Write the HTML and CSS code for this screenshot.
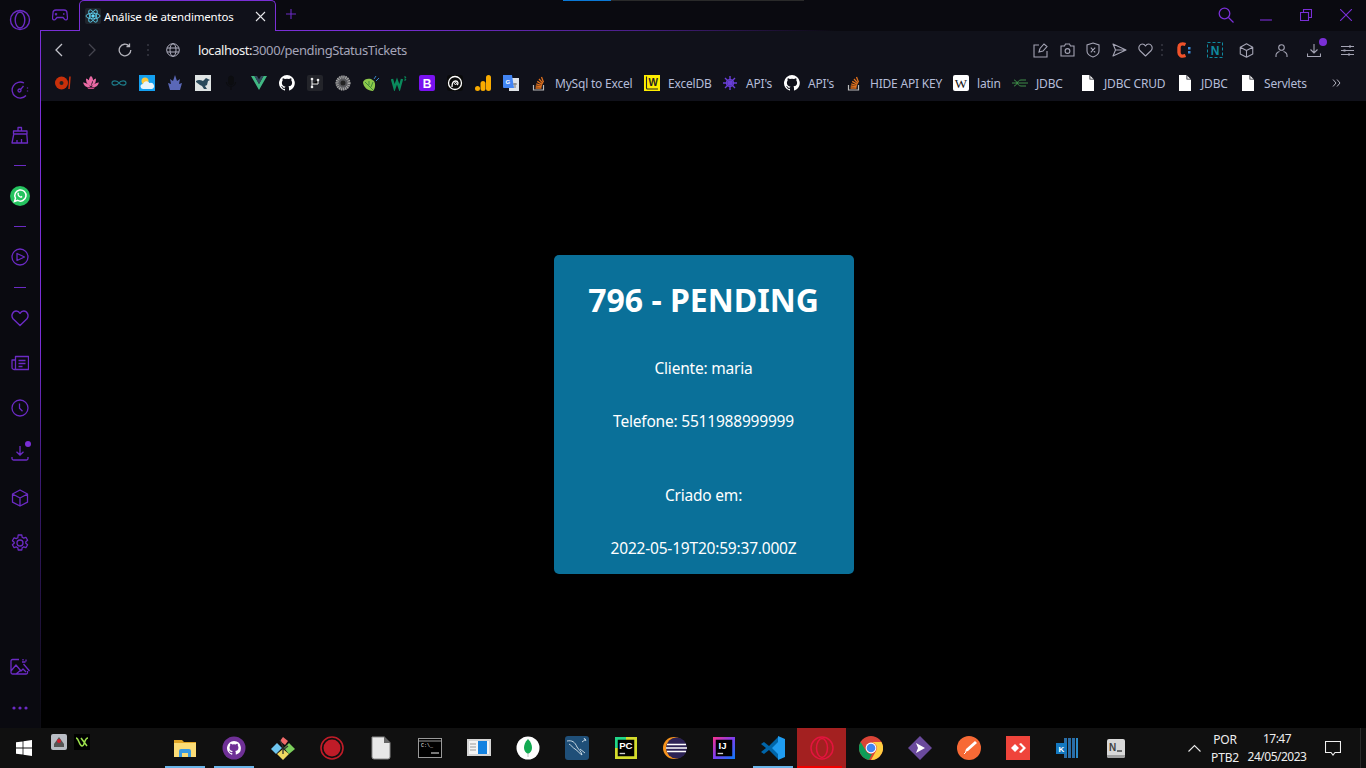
FILE: index.html
```html
<!DOCTYPE html>
<html>
    <head>
        <meta charset="utf-8" />
        <title>Análise de atendimentos</title>
        <link rel="stylesheet" href="styles.css">
    </head>
    <body>
        <svg class="defs" width="0" height="0">
            <symbol id="i-github" viewBox="0 0 16 16">
                <path fill="#fff" d="M8 0a8 8 0 0 0-2.5 15.6c.4.1.5-.2.5-.4v-1.4c-2.2.5-2.7-1-2.7-1-.4-.9-.9-1.200-.9-1.200-.7-.5.1-.5.1-.5.8.1 1.200.8 1.200.8.7 1.200 1.900.9 2.300.7.1-.5.3-.9.5-1.100-1.800-.2-3.600-.9-3.600-4 0-.9.3-1.600.8-2.100-.1-.2-.4-1 .1-2.100 0 0 .7-.2 2.200.8a7.600 7.600 0 0 1 4 0c1.500-1 2.200-.8 2.200-.8.4 1.100.2 1.900.1 2.100.5.6.8 1.300.8 2.100 0 3.100-1.900 3.700-3.700 3.900.3.3.6.7.6 1.500v2.200c0 .2.100.5.6.4A8 8 0 0 0 8 0z"/>
            </symbol>
            <symbol id="i-stack" viewBox="0 0 16 16">
                <path fill="none" stroke="#bbb" stroke-width="1.200" d="M2.500 10v5h10v-5"/>
                <path fill="none" stroke="#e0701c" stroke-width="1.300" d="M4.500 13h6M4.700 11l6 .6M5.200 8.800l5.800 1.700M6.200 6.400l5.200 3M8 4l4 4.400M10.500 2l2 5.300"/>
            </symbol>
            <symbol id="i-file" viewBox="0 0 16 16">
                <path fill="#fff" d="M2 0h7.500L14 4.500V16H2z"/>
                <path fill="#12131c" d="M9.500 0v4.500H14v-.8h-3.700V0z"/>
            </symbol>
            <symbol id="i-box" viewBox="0 0 18 18">
                <path fill="none" stroke="currentColor" stroke-width="1.300" stroke-linejoin="round" d="M9 1l7.500 4v8.200L9 17l-7.500-3.800V5zM1.500 5L9 9l7.500-4M9 9v8"/>
            </symbol>
        </svg>

        <div class="app">
            <aside class="sidebar">
                <div class="side-logo">
                    <svg width="22" height="22" viewBox="0 0 22 22" fill="none" stroke="#6b2bc4" stroke-width="1.400"><circle cx="11" cy="11" r="9.500"/><ellipse cx="11" cy="11" rx="4.800" ry="8"/></svg>
                </div>
                <div class="side-top">
                    <div class="side-btn"><svg width="18" height="18" viewBox="0 0 18 18" fill="none" stroke="#6b2bc4" stroke-width="1.300"><path d="M15 14.500A8 8 0 1 1 13 2"/><circle cx="8.500" cy="9.500" r="1.500"/><path d="M9.700 8.300l2.800-3.300"/><path stroke-dasharray="1 2" d="M16.500 6.500v5"/></svg></div>
                    <div class="side-btn"><svg width="18" height="18" viewBox="0 0 18 18" fill="none" stroke="#6b2bc4" stroke-width="1.300" stroke-linejoin="round"><path d="M7 5V1.500h3.500V5M2.500 5H16v3H2.500zM2.800 8L1 17h15.500l-.7-9M6 17v-3M10.500 17v-4"/></svg></div>
                    <div class="side-sep"></div>
                    <div class="side-btn"><svg width="20" height="20" viewBox="0 0 20 20"><circle cx="10" cy="10" r="10" fill="#25c35f"/><path fill="none" stroke="#fff" stroke-width="1.500" d="M4.500 15.500l1-3.300a5.600 5.600 0 1 1 2.200 2.200z"/><path fill="#fff" d="M7.600 6.800c.5-.5.900-.3 1.100.2l.4.900-.5.700c.4.800 1 1.400 1.900 1.800l.7-.6 1.100.6c.2.600-.1 1.200-.9 1.400-2.200.2-4.700-2.500-3.800-5z"/></svg></div>
                    <div class="side-sep"></div>
                    <div class="side-btn"><svg width="18" height="18" viewBox="0 0 18 18" fill="none" stroke="#6b2bc4" stroke-width="1.300" stroke-linejoin="round"><circle cx="9" cy="9" r="8"/><path d="M6 5.500L13.500 9 6 12.500z"/></svg></div>
                    <div class="side-sep"></div>
                    <div class="side-btn"><svg width="18" height="18" viewBox="0 0 18 18" fill="none" stroke="#6b2bc4" stroke-width="1.400" stroke-linejoin="round"><path d="M9 16.500L2 9.700C-.5 6.500 2 2 5.200 2 7 2 8.300 3 9 4.300 9.700 3 11 2 12.800 2 16 2 18.500 6.500 16 9.700z"/></svg></div>
                    <div class="side-btn"><svg width="18" height="18" viewBox="0 0 18 18" fill="none" stroke="#6b2bc4" stroke-width="1.300" stroke-linejoin="round"><path d="M4.500 2.500h13v13H3A2 2 0 0 1 1 13.500V6h3.500zM4.500 6v9M7.500 6.500h7M7.500 9.500h7M7.500 12.500h4"/></svg></div>
                    <div class="side-btn"><svg width="18" height="18" viewBox="0 0 18 18" fill="none" stroke="#6b2bc4" stroke-width="1.300"><circle cx="9" cy="9" r="8"/><path d="M8.500 4.500v4.700l3 3"/></svg></div>
                    <div class="side-btn has-dot"><svg width="18" height="18" viewBox="0 0 18 18" fill="none" stroke="#6b2bc4" stroke-width="1.300"><path d="M9 2v9M5.500 7.800L9 11l3.500-3.200M1 13v1.500A1.500 1.500 0 0 0 2.500 16h13a1.500 1.500 0 0 0 1.500-1.500V13"/></svg><span class="badge"></span></div>
                    <div class="side-btn"><svg width="18" height="18" class="purple"><use href="#i-box"/></svg></div>
                    <div class="side-btn"><svg width="18" height="18" viewBox="0 0 18 18" fill="none" stroke="#6b2bc4" stroke-width="1.300" stroke-linejoin="round"><circle cx="9" cy="9" r="3"/><path d="M7.200 1h3.600l.4 2.300 1.500.8 2.200-.8 1.700 3-1.800 1.500v1.400l1.800 1.500-1.700 3-2.200-.8-1.500.8-.4 2.300H7.200l-.4-2.300-1.500-.8-2.200.8-1.700-3 1.800-1.500V8.300L1.400 6.800l1.700-3 2.200.8 1.500-.8z"/></svg></div>
                </div>
                <div class="side-bottom">
                    <div class="side-low"><svg width="20" height="18" viewBox="0 0 20 18" fill="none" stroke="#6b2bc4" stroke-width="1.300" stroke-linejoin="round"><path d="M9 1.500H2.500A1.500 1.500 0 0 0 1 3v11.500A1.500 1.500 0 0 0 2.500 16H16a1.500 1.500 0 0 0 1.500-1V13M1 13l5-6 5 6 2-2 3 3M6 16l5-4M13 1v1.500M12 4h3.500M13.500 6l6 7M16 1.500v2"/></svg></div>
                    <div class="side-low"><svg width="16" height="4" viewBox="0 0 16 4" fill="#6b2bc4"><circle cx="2" cy="2" r="1.600"/><circle cx="8" cy="2" r="1.600"/><circle cx="14" cy="2" r="1.600"/></svg></div>
                </div>
            </aside>

            <div class="browser">
                <header class="tabstrip">
                    <span class="progress"></span>
                    <div class="tab-game"><svg width="16" height="12" viewBox="0 0 16 12" fill="none" stroke="#6b2bc4" stroke-width="1.300"><path d="M4 1h8a3 3 0 0 1 3 3l.5 5c0 2-2.200 2.500-3.200 1L11 8.500H5L3.700 10C2.700 11.500.5 11 .5 9L1 4a3 3 0 0 1 3-3zM4 4v2.500M2.800 5.200h2.400M11 5h1.500"/></svg></div>
                    <div class="tab">
                        <span class="tab-favicon"><svg width="16" height="16" viewBox="0 0 16 16" fill="none" stroke="#61dafb" stroke-width=".8"><circle cx="8" cy="8" r="1.300" fill="#61dafb"/><ellipse cx="8" cy="8" rx="7" ry="2.800"/><ellipse cx="8" cy="8" rx="7" ry="2.800" transform="rotate(60 8 8)"/><ellipse cx="8" cy="8" rx="7" ry="2.800" transform="rotate(120 8 8)"/></svg></span>
                        <span class="tab-title">Análise de atendimentos</span>
                        <svg class="tab-close" width="11" height="11" viewBox="0 0 11 11" stroke="#e6e6ea" stroke-width="1.100"><path d="M1 1l9 9M10 1l-9 9"/></svg>
                    </div>
                    <div class="tab-new"><svg width="12" height="12" viewBox="0 0 12 12" stroke="#6b2bc4" stroke-width="1.100"><path d="M6 1v10M1 6h10"/></svg></div>
                    <div class="win-buttons">
                        <span><svg width="16" height="16" viewBox="0 0 16 16" fill="none" stroke="#7a2fd6" stroke-width="1.300"><circle cx="6.500" cy="6.500" r="5.300"/><path d="M10.500 10.500l5 5"/></svg></span>
                        <span><svg width="12" height="12" viewBox="0 0 12 12" stroke="#7a2fd6" stroke-width="1.100"><path d="M0 11h12"/></svg></span>
                        <span><svg width="12" height="12" viewBox="0 0 12 12" fill="none" stroke="#7a2fd6" stroke-width="1.100"><path d="M.5 3.500h8v8h-8zM3.500 3.500v-3h8v8h-3"/></svg></span>
                        <span><svg width="12" height="12" viewBox="0 0 12 12" stroke="#7a2fd6" stroke-width="1.100"><path d="M0 0l12 12M12 0L0 12"/></svg></span>
                    </div>
                </header>

                <div class="panel">
                    <div class="toolbar">
                        <div class="nav-left">
                            <span><svg width="10" height="14" viewBox="0 0 10 14" fill="none" stroke="#c4c4cc" stroke-width="1.300"><path d="M8 1L2 7l6 6"/></svg></span>
                            <span><svg width="10" height="14" viewBox="0 0 10 14" fill="none" stroke="#45454f" stroke-width="1.300"><path d="M2 1l6 6-6 6"/></svg></span>
                            <span><svg width="14" height="14" viewBox="0 0 14 14" fill="none" stroke="#b4b4bc" stroke-width="1.300"><path d="M12.800 7a5.800 5.800 0 1 1-1.700-4.100M11.500.5v3h-3"/></svg></span>
                            <span class="dots"></span>
                            <span><svg width="14" height="14" viewBox="0 0 14 14" fill="none" stroke="#b0b0c0" stroke-width="1"><circle cx="7" cy="7" r="6.300"/><ellipse cx="7" cy="7" rx="3" ry="6.300"/><path d="M1 5h12M1 9h12"/></svg></span>
                        </div>
                        <div class="url"><b>localhost:</b>3000/pendingStatusTickets</div>
                        <div class="nav-right">
                            <span><svg width="16" height="16" viewBox="0 0 16 16" fill="none" stroke="#a4a4b4" stroke-width="1.100"><path d="M6 3H1v12h13V9M6 10l1-3.500L11 2l3 2.500-4 4.500z"/></svg></span>
                            <span><svg width="15" height="14" viewBox="0 0 15 14" fill="none" stroke="#a4a4b4" stroke-width="1.100"><path d="M1 3h3.500L5.500 1h4l1 2H14v10H1z"/><circle cx="7.500" cy="8" r="2.400"/></svg></span>
                            <span><svg width="14" height="16" viewBox="0 0 14 16" fill="none" stroke="#a4a4b4" stroke-width="1.100"><path d="M7 1l6 2v6c0 3-3 5-6 6-3-1-6-3-6-6V3zM4.800 5.700l4.400 4.600M9.200 5.700l-4.400 4.600"/></svg></span>
                            <span><svg width="15" height="14" viewBox="0 0 15 14" fill="none" stroke="#a4a4b4" stroke-width="1.100" stroke-linejoin="round"><path d="M1 1l13 6-13 6 2.500-6zM3.500 7H14"/></svg></span>
                            <span><svg width="15" height="14" viewBox="0 0 15 14" fill="none" stroke="#a4a4b4" stroke-width="1.100" stroke-linejoin="round"><path d="M7.500 13L1.800 7.500C-.3 5 1.500 1 4.200 1c1.500 0 2.700.8 3.300 2 .6-1.200 1.800-2 3.300-2 2.700 0 4.500 4 2.400 6.500z"/></svg></span>
                            <span class="dots"></span>
                            <span><svg width="14" height="16" viewBox="0 0 14 16"><path fill="none" stroke="#f0522a" stroke-width="3.400" d="M8.500 2.500C4.500 1 2 2.500 2 5.500v5c0 3 2.500 4.500 6.500 3"/><rect x="11" y="5" width="2.500" height="2.500" fill="#3a8ad8"/><rect x="11" y="9" width="2.500" height="2.500" fill="#3a8ad8"/></svg></span>
                            <span><svg width="16" height="16" viewBox="0 0 16 16"><rect x=".5" y=".5" width="15" height="15" fill="none" stroke="#0f8aa0" stroke-dasharray="3 2"/><text x="8" y="12.500" class="ext-n">N</text></svg></span>
                            <span class="grey"><svg width="15" height="15"><use href="#i-box"/></svg></span>
                            <span><svg width="13" height="13" viewBox="0 0 13 13" fill="none" stroke="#a4a4b4" stroke-width="1.100"><circle cx="6.500" cy="3.500" r="2.800"/><path d="M1 13v-1.500C1 9 3 8 4.500 7.500M12 13v-1.500C12 9 10 8 8.500 7.500"/></svg></span>
                            <span class="has-dot"><svg width="14" height="14" viewBox="0 0 14 14" fill="none" stroke="#a4a4b4" stroke-width="1.100"><path d="M7 1v9M3.500 6.500L7 10l3.500-3.500M.5 10.500v3h13v-3"/></svg><span class="badge badge-top"></span></span>
                            <span><svg width="13" height="11" viewBox="0 0 13 11" stroke="#a4a4b4" stroke-width="1"><path d="M0 1.500h13M0 5.500h13M0 9.500h13"/><path stroke-width="2" d="M9 .5v2M3.500 4.500v2M8 8.500v2"/></svg></span>
                        </div>
                    </div>

                    <nav class="bookmarks">
                        <span class="bm"><svg width="16" height="16" viewBox="0 0 16 16"><circle cx="6.500" cy="8" r="6.500" fill="#c8300a"/><circle cx="6.500" cy="8" r="2" fill="#222"/><path stroke="#c8300a" stroke-width="1.500" d="M15 1.500L14 14"/></svg></span>
                        <span class="bm"><svg width="16" height="16" viewBox="0 0 16 16" fill="#ea6aa4"><path d="M8 1c2.500 2 3 6 0 10-3-4-2.500-8 0-10zM3 3.500c2.500.5 4.500 3 5 7.500-4-1-5-4-5-7.500zM13 3.500c-2.500.5-4.500 3-5 7.500 4-1 5-4 5-7.500z"/><path d="M0 7.500c2 0 5 1 7.500 4-3.500 1.500-6 .5-7.500-4zM16 7.500c-2 0-5 1-7.500 4 3.500 1.500 6 .5 7.500-4z"/><path fill="#c84a85" d="M4 12.500h8L10.500 14h-5z"/></svg></span>
                        <span class="bm"><svg width="16" height="16" viewBox="0 0 16 16" fill="none" stroke="#1d7a88" stroke-width="1.200"><path d="M8 8C6.500 5.500 1 5 1 8s5.500 2.500 7 0c1.500-2.500 7-3 7 0s-5.500 2.500-7 0z"/></svg></span>
                        <span class="bm"><svg width="16" height="16" viewBox="0 0 16 16"><rect width="16" height="16" fill="#14a0f0"/><circle cx="6" cy="6" r="3.500" fill="#ffc83a"/><path fill="#e8f4fc" d="M4 14a2.500 2.500 0 0 1 0-5 3.500 3.500 0 0 1 6.500-1A3 3 0 0 1 13 14z"/></svg></span>
                        <span class="bm"><svg width="16" height="16" viewBox="0 0 16 16" fill="#5a68b8"><path d="M8 0l2 6 3-2-1 5 3-1-2 7H3L1 8l3 1-1-5 3 2z"/></svg></span>
                        <span class="bm"><svg width="16" height="16" viewBox="0 0 16 16"><rect width="16" height="16" fill="#dfe4e4"/><path fill="#2a4a5c" d="M1 6c2-1.500 5-1 7 0l3-3 2 1 2 1-2 1-1 4-2 1 2 3H9l-2-3-2-1-4-3z"/></svg></span>
                        <span class="bm"><svg width="16" height="16" viewBox="0 0 16 16" fill="#0c0d10" stroke="#0c0d10"><rect x="5.500" y="1" width="5" height="9" rx="2.500"/><path fill="none" stroke-width="1.200" d="M3.500 7a4.500 4.500 0 0 0 9 0M8 11.500V15"/></svg></span>
                        <span class="bm"><svg width="16" height="16" viewBox="0 0 16 16"><path fill="#41b883" d="M0 1h3.500L8 9l4.500-8H16L8 15z"/><path fill="#34495e" d="M3.500 1h2.500L8 4.500 10 1h2.500L8 9z"/></svg></span>
                        <span class="bm"><svg width="16" height="16"><use href="#i-github"/></svg></span>
                        <span class="bm"><svg width="16" height="16" viewBox="0 0 16 16"><rect width="16" height="16" rx="2" fill="#23242a"/><path stroke="#eee" d="M5 4v8M5 9h6V5"/><circle cx="5" cy="4" r="1.300" fill="#eee"/><circle cx="5" cy="12" r="1.300" fill="#eee"/><circle cx="11" cy="5" r="1.300" fill="#eee"/></svg></span>
                        <span class="bm"><svg width="16" height="16" viewBox="0 0 16 16" fill="none"><circle cx="8" cy="8" r="7.500" fill="#55565a"/><circle cx="8" cy="8" r="6" stroke="#a8a8a8" stroke-width="3" stroke-dasharray="1 1"/><circle cx="8" cy="8" r="2.500" fill="#222"/></svg></span>
                        <span class="bm"><svg width="16" height="16" viewBox="0 0 16 16"><path fill="#8cc84b" d="M0 7c1-3 5-4 8-3l3 2c2 3 1 8-1 10-5 0-10-4-10-9z"/><path stroke="#3e8a3a" fill="none" d="M2 7l8 8M6 10V6M8 12l2-5"/><path stroke="#3a86c8" d="M11 4l2-3M13 6l3-3"/></svg></span>
                        <span class="bm"><svg width="16" height="16" viewBox="0 0 16 16"><path fill="none" stroke="#0a8a5c" stroke-width="2.400" d="M1 4l2.500 9L6 6l2.500 7L11 4"/><path stroke="#0a8a5c" d="M13 2h2l-1 1.500 1 1.500h-2"/></svg></span>
                        <span class="bm"><svg width="16" height="16" viewBox="0 0 16 16"><rect width="16" height="16" rx="2" fill="#7a12f0"/><text x="8" y="12.500" class="bm-b">B</text></svg></span>
                        <span class="bm"><svg width="16" height="16" viewBox="0 0 16 16" fill="none" stroke="#fff"><rect width="16" height="16" rx="3" fill="#0a0a0a" stroke="none"/><circle cx="8" cy="8" r="6.500" stroke-width="1.300"/><path stroke-width="1.300" d="M5 12c0-3 .5-6 3.500-6s3 3 1.500 4"/><circle cx="8.500" cy="8.500" r="1"/></svg></span>
                        <span class="bm"><svg width="16" height="16" viewBox="0 0 16 16" fill="#f9ab00"><rect x="11" y="0" width="5" height="16" rx="2.500"/><rect x="5.500" y="6" width="5" height="10" rx="2.500"/><circle cx="2.500" cy="13.500" r="2.500"/></svg></span>
                        <span class="bm"><svg width="16" height="16" viewBox="0 0 16 16"><rect x="6" y="3" width="10" height="13" fill="#dfe3e8"/><path fill="#4285f4" d="M0 0h9l2 13H1a1 1 0 0 1-1-1z"/><text x="4.800" y="8.500" class="bm-g">G</text><path stroke="#777" d="M10 9h4M12 8v5"/></svg></span>
                        <a class="bm"><svg width="16" height="16"><use href="#i-stack"/></svg><span class="bm-label w-mysql">MySql to Excel</span></a>
                        <a class="bm"><svg width="16" height="16" viewBox="0 0 16 16"><rect width="16" height="16" fill="#ffee00"/><path fill="none" stroke="#222" stroke-width="1.100" d="M2.500 1.500V13a1 1 0 0 0 1 1H14"/><text x="9.200" y="11" class="bm-w">W</text></svg><span class="bm-label w-exceldb">ExcelDB</span></a>
                        <a class="bm"><svg width="16" height="16" viewBox="0 0 16 16" fill="none" stroke="#6a3fd8" stroke-width="1.400"><circle cx="8" cy="8" r="3.400"/><path d="M8 1v14M1 8h14M3 3l10 10M13 3L3 13"/><circle cx="8" cy="8" r="1" fill="#6a3fd8"/></svg><span class="bm-label w-api">API's</span></a>
                        <a class="bm"><svg width="16" height="16"><use href="#i-github"/></svg><span class="bm-label w-api">API's</span></a>
                        <a class="bm"><svg width="16" height="16"><use href="#i-stack"/></svg><span class="bm-label w-hide">HIDE API KEY</span></a>
                        <a class="bm"><svg width="16" height="16" viewBox="0 0 16 16"><rect width="16" height="16" rx="2" fill="#fff"/><text x="8" y="12.500" class="bm-wiki">W</text></svg><span class="bm-label w-latin">latin</span></a>
                        <a class="bm"><svg width="16" height="16" viewBox="0 0 16 16" fill="none" stroke="#3e8e48" stroke-width="1"><path d="M2 5c3 0 3 6 7 6h5M2 11c3 0 3-6 7-6h5M0 8h16"/></svg><span class="bm-label w-jdbc">JDBC</span></a>
                        <a class="bm bm-file"><svg width="16" height="16"><use href="#i-file"/></svg><span class="bm-label w-crud">JDBC CRUD</span></a>
                        <a class="bm"><svg width="16" height="16"><use href="#i-file"/></svg><span class="bm-label w-jdbc">JDBC</span></a>
                        <a class="bm"><svg width="16" height="16"><use href="#i-file"/></svg><span class="bm-label w-servlets">Servlets</span></a>
                        <span class="bm-more"><svg width="9" height="8" viewBox="0 0 9 8" fill="none" stroke="#b4b4c0"><path d="M1 .5L4 4 1 7.500M5 .5L8 4 5 7.500"/></svg></span>
                    </nav>

                    <main class="content">
                        <section class="ticket">
                            <h1>796 - PENDING</h1>
                            <p>Cliente: maria</p>
                            <p>Telefone: 5511988999999</p>
                            <p class="created">Criado em:</p>
                            <p>2022-05-19T20:59:37.000Z</p>
                        </section>
                    </main>
                </div>
            </div>
        </div>

        <footer class="taskbar">
            <div class="start"><svg width="16" height="16" viewBox="0 0 16 16" fill="#fff"><path d="M0 2.300l6.600-.9v6.200H0zM7.400 1.300L16 0v7.600H7.400zM0 8.400h6.600v6.200L0 13.700zM7.400 8.400H16V16l-8.600-1.200z"/></svg></div>
            <div class="tray-apps">
                <svg width="16" height="16" viewBox="0 0 16 16"><rect width="16" height="16" rx="2" fill="#b8bcc4"/><path fill="#555" d="M3 10l5-7 5 7v3H3z"/><circle cx="8" cy="7" r="2" fill="#d02030"/></svg>
                <svg width="16" height="16" viewBox="0 0 16 16"><rect width="16" height="16" fill="#000"/><path fill="none" stroke="#9ce04c" stroke-width="1.500" d="M2 4c3 0 3 8 6 8s2-8 6-8M7 4l6 8"/></svg>
            </div>
            <div class="apps">
                <div class="app-icon is-open"><svg width="24" height="24" viewBox="0 0 24 24"><path fill="#e0a526" d="M1 4h8l2 2h12v3H1z"/><path fill="#fbdc76" d="M1 7h22v14H1z"/><path fill="#3a9ae0" d="M6 21v-6a2 2 0 0 1 2-2h8a2 2 0 0 1 2 2v6h-3v-4H9v4z"/></svg></div>
                <div class="app-icon is-open"><svg width="24" height="24" viewBox="0 0 24 24"><circle cx="12" cy="12" r="11.500" fill="#6f3096"/><svg x="5" y="5" width="14" height="14"><use href="#i-github"/></svg></svg></div>
                <div class="app-icon"><svg width="24" height="24" viewBox="0 0 24 24"><path fill="#f06a6a" d="M9 5l3-4 5 4-3 4z"/><path fill="#6ec6f0" d="M0 13l6-6 5 5-6 6z"/><path fill="#7ccf5c" d="M13 12l5-5 6 6-6 5z"/><path fill="#f0d860" d="M6 18l6-5 6 5-6 6z"/><path fill="none" stroke="#333" stroke-width="1.300" d="M9 4l3 7v7M12 14l5-4"/></svg></div>
                <div class="app-icon"><svg width="24" height="24" viewBox="0 0 24 24"><circle cx="12" cy="12" r="11" fill="none" stroke="#c01c28" stroke-width="1.600"/><circle cx="12" cy="12" r="8.500" fill="#c01c28"/></svg></div>
                <div class="app-icon"><svg width="20" height="24" viewBox="0 0 20 24"><path fill="#e8e8e8" stroke="#888" d="M1 1h12l6 6v14a2 2 0 0 1-2 2H3a2 2 0 0 1-2-2z"/><path fill="#666" d="M13 0l7 7h-7z"/></svg></div>
                <div class="app-icon"><svg width="24" height="24" viewBox="0 0 24 24"><rect x=".5" y="2.500" width="23" height="19" fill="#000" stroke="#999"/><path stroke="#999" d="M0 5h24"/><text x="3" y="11" class="cmd-text">C:\_</text><path stroke="#eee" d="M13 17h8"/></svg></div>
                <div class="app-icon"><svg width="24" height="24" viewBox="0 0 24 24"><rect y="3" width="24" height="17" fill="#d4d4d4"/><rect x="2" y="5" width="20" height="13" fill="#f4f4f4"/><rect x="11" y="5" width="9" height="13" fill="#1482e0"/><path stroke="#999" d="M3 8h6M3 11h6M3 14h6"/></svg></div>
                <div class="app-icon"><svg width="24" height="24" viewBox="0 0 24 24"><circle cx="12" cy="12" r="11.500" fill="#fff"/><path fill="#13aa52" d="M12 3c3 3 4 6 4 9 0 3-2 5-4 6-2-1-4-3-4-6 0-3 1-6 4-9z"/><path stroke="#b8c4c2" d="M12 17v4"/></svg></div>
                <div class="app-icon"><svg width="24" height="24" viewBox="0 0 24 24"><rect width="24" height="24" rx="3" fill="#1f4f78"/><path fill="none" stroke="#d8e4ec" stroke-width=".9" d="M2 5c5-1 8 1 10 6 2 3 4 4 5 8-3-2-4-4-7-6-2-1-4-4-6-5M15 13l5 4M17 6l4-3M19 2l2 3"/></svg></div>
                <div class="app-icon"><svg width="22" height="22" viewBox="0 0 24 24"><rect width="24" height="24" fill="#d4dc2c"/><rect width="12" height="12" fill="#21d789"/><rect x="3" y="3" width="18" height="18" fill="#000"/><text x="4.500" y="13.500" class="ide-text">PC</text><path stroke="#ccc" stroke-width="1.500" d="M5 18h6"/></svg></div>
                <div class="app-icon"><svg width="24" height="24" viewBox="0 0 24 24"><circle cx="11" cy="12" r="11" fill="#f7941e"/><circle cx="13.500" cy="12" r="10.500" fill="#2c2255"/><path stroke="#fff" stroke-width="1.600" d="M4 8.500h19M3 12h21M4 15.500h19"/></svg></div>
                <div class="app-icon"><svg width="22" height="22" viewBox="0 0 24 24"><defs><linearGradient id="ij" x1="0" y1="0" x2="1" y2="1"><stop offset="0" stop-color="#fc318c"/><stop offset=".5" stop-color="#7b3ff0"/><stop offset="1" stop-color="#087cfa"/></linearGradient></defs><rect width="24" height="24" fill="url(#ij)"/><rect x="3" y="3" width="18" height="18" fill="#000"/><text x="6" y="13.500" class="ide-text">IJ</text><path stroke="#ccc" stroke-width="1.500" d="M5 18h6"/></svg></div>
                <div class="app-icon is-open"><svg width="24" height="24" viewBox="0 0 24 24"><path fill="#0065a9" d="M17 1L8 10 3 6 0 8l5 4-5 4 3 2 5-4 9 9z"/><path fill="#1f9cf0" d="M17 0l7 3v18l-7 3V6l-6 6 6 6z"/></svg></div>
                <div class="app-icon is-active"><svg width="24" height="24" viewBox="0 0 24 24" fill="none" stroke="#e3143e" stroke-width="1.500"><circle cx="12" cy="12" r="11"/><ellipse cx="12" cy="12" rx="5.500" ry="9.500"/></svg></div>
                <div class="app-icon"><svg width="24" height="24" viewBox="0 0 24 24"><circle cx="12" cy="12" r="12" fill="#db4437"/><path fill="#0f9d58" d="M12 24A12 12 0 0 1 1.600 6L7 15a6 6 0 0 0 6 3l-3 5.800z"/><path fill="#ffcd40" d="M12 6h10.400a12 12 0 0 1-10.400 18l5-9a6 6 0 0 0-5-9z"/><circle cx="12" cy="12" r="5.400" fill="#fff"/><circle cx="12" cy="12" r="4.300" fill="#4285f4"/></svg></div>
                <div class="app-icon"><svg width="24" height="24" viewBox="0 0 24 24"><path fill="#6a4a9c" d="M12 0l12 12-12 12L0 12z"/><path fill="#fff" d="M8 7l9 5-9 5 2-5z"/></svg></div>
                <div class="app-icon"><svg width="24" height="24" viewBox="0 0 24 24"><circle cx="12" cy="12" r="12" fill="#f76935"/><path fill="#fff" d="M18 5l2 2-9 8-3 1 1-3z"/><path stroke="#fff" d="M7 18l2-2"/></svg></div>
                <div class="app-icon"><svg width="24" height="24" viewBox="0 0 24 24"><rect width="24" height="24" fill="#ef443b"/><path fill="#fff" d="M9 8l4 4-4 4-4-4zM15 7l5 5-5 5-2-1 4-4-4-4z"/></svg></div>
                <div class="app-icon"><svg width="24" height="24" viewBox="0 0 24 24"><path fill="#2a6ea8" d="M9 2h3v20H9zM13 2h3v20h-3zM17 2h3v20h-3z"/><rect x="21" y="2" width="2" height="20" fill="#2a8ac8"/><rect x="1" y="7" width="11" height="11" fill="#1478c0"/><text x="6.500" y="16" class="k-text">K</text></svg></div>
                <div class="app-icon"><svg width="24" height="24" viewBox="0 0 24 24"><rect x="3" y="3" width="18" height="19" rx="2" fill="#d8d8d8"/><path fill="#a0a0a0" d="M3 19h18v1a2 2 0 0 1-2 2H5a2 2 0 0 1-2-2z"/><text x="5" y="15" class="notion-text">N</text><path stroke="#444" stroke-width="1.500" d="M13 15h5"/></svg></div>
            </div>
            <div class="tray">
                <div class="tray-chevron"><svg width="13" height="8" viewBox="0 0 13 8" fill="none" stroke="#e8e8e8" stroke-width="1.100"><path d="M.5 7.500l6-6 6 6"/></svg></div>
                <div class="tray-lang"><span>POR</span><span>PTB2</span></div>
                <div class="tray-clock"><span>17:47</span><span>24/05/2023</span></div>
                <div class="tray-notify"><svg width="16" height="15" viewBox="0 0 16 15" fill="none" stroke="#f0f0f0" stroke-width="1.100"><path d="M.5.500h15v11H10l-2 2.500-2-2.500H.5z"/></svg></div>
                <div class="show-desktop"></div>
            </div>
        </footer>
    </body>
</html>
```

FILE: styles.css
```css
* {
    box-sizing: border-box;
}

body {
    margin: 0;
    height: 768px;
    overflow: hidden;
    background: #000;
    font-family: "Noto Sans", "Open Sans", sans-serif;
    display: flex;
    flex-direction: column;
}

svg {
    display: block;
}

.defs {
    position: absolute;
}

.app {
    height: 728px;
    display: flex;
}

/* left rail */
.sidebar {
    width: 40px;
    background: #0a0a10;
    display: flex;
    flex-direction: column;
}

.side-logo {
    height: 67px;
    padding: 9px 0 0 9px;
}

.side-top {
    display: flex;
    flex-direction: column;
}

.side-btn,
.side-low {
    display: flex;
    align-items: center;
    justify-content: center;
    position: relative;
}

.side-btn {
    height: 45px;
}

.side-low {
    height: 41px;
}

.side-sep {
    width: 12px;
    height: 16px;
    margin-left: 14px;
    background: linear-gradient(#6b2bc4, #6b2bc4) center / 12px 1px no-repeat;
}

.side-bottom {
    margin-top: auto;
}

.purple {
    color: #6b2bc4;
}

.badge {
    position: absolute;
    top: 11px;
    left: 25px;
    width: 6px;
    height: 6px;
    border-radius: 50%;
    background: #7a2fd6;
}

.badge-top {
    top: 7px;
    left: 21px;
    width: 8px;
    height: 8px;
}

/* tabs */
.browser {
    flex: 1;
    min-width: 0;
    display: flex;
    flex-direction: column;
}

.tabstrip {
    height: 31px;
    display: flex;
    position: relative;
    background: #0a0a10;
    border-bottom: 1px solid #6b2bc4;
    border-image: linear-gradient(to right, #7a2fd6 25%, #4a1f88 45%, #0a0a10 60%) 1;
}

.progress {
    position: absolute;
    top: 0;
    left: 523px;
    width: 241px;
    height: 1px;
    background: linear-gradient(to right, #0a78d6 48px, #2a2a2a 48px);
}

.tab-game {
    width: 39px;
    display: flex;
    align-items: center;
    justify-content: center;
}

.tab {
    width: 197px;
    height: 31px;
    display: flex;
    align-items: center;
    padding: 0 9px 0 5px;
    background: #10111a;
    border: 1px solid #7a2fd6;
    border-bottom: 0;
    border-radius: 5px 5px 0 0;
    position: relative;
    z-index: 1;
}

.tab-favicon {
    width: 16px;
    height: 16px;
    margin-right: 3px;
    background: #20252c;
    border-radius: 2px;
}

.tab-title {
    flex: 1;
    font-size: 11.5px;
    letter-spacing: -0.17px;
    color: #fff;
    white-space: nowrap;
}

.tab-new {
    width: 30px;
    padding-bottom: 3px;
    display: flex;
    align-items: center;
    justify-content: center;
}

.win-buttons {
    margin-left: auto;
    display: grid;
    grid-template-columns: repeat(4, 40px);
}

.win-buttons span {
    display: flex;
    align-items: center;
    justify-content: center;
}

/* toolbar + bookmarks */
.panel {
    flex: 1;
    min-height: 0;
    display: flex;
    flex-direction: column;
    border-left: 1px solid #6b2bc4;
    border-image: linear-gradient(#7a2fd6 45%, #3a1a70 65%, #0c0c12 100%) 1;
}

.toolbar {
    height: 38px;
    background: #10111a;
    display: flex;
    align-items: center;
    padding-left: 1px;
}

.nav-left,
.nav-right {
    display: grid;
    height: 100%;
}

.nav-left {
    grid-template-columns: 33px 33px 33px 14px 36px;
}

.nav-right {
    margin-left: auto;
    margin-right: 2px;
    grid-template-columns: repeat(5, 26px) 8px 36px 26px 36px 34px 32px 34px;
}

.nav-left > span,
.nav-right > span {
    display: flex;
    align-items: center;
    justify-content: center;
    position: relative;
}

.dots::before {
    content: "";
    width: 2px;
    height: 2px;
    background: #2d2e38;
    box-shadow: 0 -5px #2d2e38, 0 5px #2d2e38;
}

.grey {
    color: #a4a4b4;
}

.url {
    margin-left: 7px;
    font-size: 13px;
    letter-spacing: -0.43px;
    color: #a4a4b8;
    white-space: nowrap;
}

.url b {
    font-weight: 400;
    color: #f0f0f0;
}

.ext-n {
    font: 700 12px "Liberation Sans", sans-serif;
    fill: #0f8aa0;
    text-anchor: middle;
}

.bookmarks {
    height: 32px;
    background: #10111a;
    display: flex;
    align-items: center;
    gap: 12px;
    padding: 0 0 4px 14px;
}

.bm {
    display: flex;
    align-items: center;
    gap: 8px;
}

.bm-file {
    margin-left: 5px;
}

.bm-label {
    font-size: 12px;
    letter-spacing: -0.2px;
    color: #b4bcd8;
    white-space: nowrap;
}

.w-mysql { width: 77px; }
.w-exceldb { width: 42px; }
.w-api { width: 26px; }
.w-hide { width: 71px; }
.w-latin { width: 23px; }
.w-jdbc { width: 27px; }
.w-crud { width: 61px; }
.w-servlets { width: 41px; }

.bm-more {
    margin-left: 15px;
}

.bm-b {
    font: 700 12px "Liberation Sans", sans-serif;
    fill: #fff;
    text-anchor: middle;
}

.bm-g {
    font: 700 6px "Liberation Sans", sans-serif;
    fill: #fff;
    text-anchor: middle;
}

.bm-w {
    font: 700 10px "Liberation Sans", sans-serif;
    fill: #222;
    text-anchor: middle;
}

.bm-wiki {
    font: 400 13px "Liberation Serif", serif;
    fill: #111;
    text-anchor: middle;
}

/* page */
.content {
    flex: 1;
    min-height: 0;
    background: #000;
    display: flex;
    align-items: center;
    justify-content: center;
}

.ticket {
    width: 300px;
    height: 319px;
    background: #0a7099;
    border-radius: 5px;
    color: #fff;
    text-align: center;
    display: flex;
    flex-direction: column;
}

.ticket h1 {
    margin: 24px 0 21px;
    font-size: 32px;
    line-height: 42px;
    font-weight: 700;
    white-space: nowrap;
}

.ticket p {
    margin: 16px 0;
    font-size: 15.5px;
    letter-spacing: -0.2px;
    line-height: 21px;
    white-space: nowrap;
}

.ticket .created {
    margin-top: 37px;
}

/* windows taskbar */
.taskbar {
    height: 40px;
    background: #101010;
    display: flex;
    color: #eee;
}

.start {
    width: 48px;
    display: flex;
    align-items: center;
    justify-content: center;
}

.tray-apps {
    width: 112px;
    display: flex;
    gap: 7px;
    padding: 6px 0 0 3px;
}

.apps {
    display: flex;
}

.app-icon {
    width: 49px;
    display: flex;
    align-items: center;
    justify-content: center;
    position: relative;
}

.app-icon.is-open::after,
.app-icon.is-active::after {
    content: "";
    position: absolute;
    bottom: 0;
    height: 2px;
}

.app-icon.is-open::after {
    left: 5px;
    right: 4px;
    background: #6ab4e8;
}

.app-icon.is-active {
    background: #a32020;
}

.app-icon.is-active::after {
    left: 0;
    right: 4px;
    background: #f00000;
}

.cmd-text {
    font: 5px "Liberation Mono", monospace;
    fill: #eee;
}

.ide-text {
    font: 700 10.5px "Liberation Sans", sans-serif;
    fill: #fff;
}

.k-text {
    font: 700 8px "Liberation Sans", sans-serif;
    fill: #fff;
    text-anchor: middle;
}

.notion-text {
    font: 700 10px "Liberation Sans", sans-serif;
    fill: #444;
}

.tray {
    margin-left: auto;
    display: flex;
    font-size: 12px;
}

.tray-chevron {
    width: 24px;
    display: flex;
    align-items: center;
    justify-content: center;
}

.tray-lang,
.tray-clock {
    display: flex;
    flex-direction: column;
    align-items: center;
    justify-content: center;
    gap: 2px;
    line-height: 16px;
    white-space: nowrap;
}

.tray-lang {
    width: 38px;
    padding-top: 1px;
    letter-spacing: -0.2px;
}

.tray-clock {
    width: 66px;
    letter-spacing: -0.5px;
}

.tray-notify {
    width: 46px;
    display: flex;
    align-items: center;
    justify-content: center;
}

.show-desktop {
    width: 6px;
    margin-left: 4px;
    border-left: 1px solid #2a2a2a;
}
```
